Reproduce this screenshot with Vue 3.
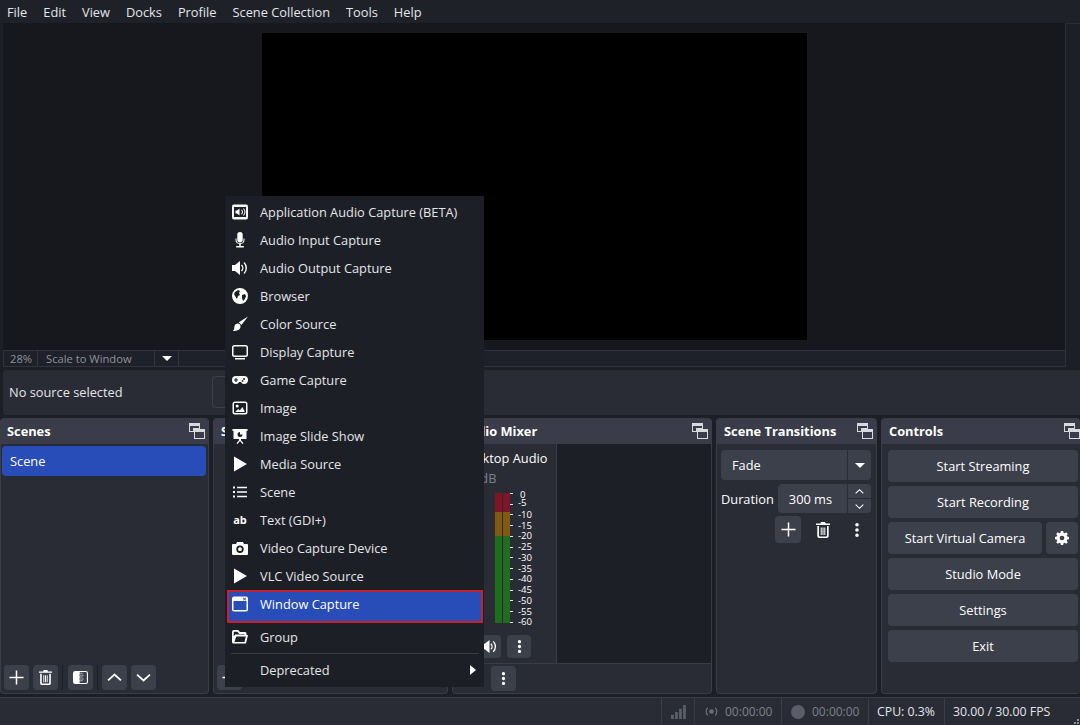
<script setup>
import { h } from 'vue'

// icon outlines, all on a 16x16 box
const icons = {
  appAudio: 'M2 .5h12a2 2 0 0 1 2 2v11a2 2 0 0 1-2 2H2a2 2 0 0 1-2-2v-11a2 2 0 0 1 2-2zM2 3v10h12V3zM3.5 6.5H5L7.5 4.5v7L5 9.5H3.5zM9 6l.8-.6a3.5 3.5 0 0 1 0 5.2L9 10a2.6 2.6 0 0 0 0-4zM11 4.8l.8-.6a5.2 5.2 0 0 1 0 7.6l-.8-.6a4.2 4.2 0 0 0 0-6.4z',
  mic: 'M8 0a2.7 2.7 0 0 1 2.7 2.7v5a2.7 2.7 0 0 1-5.4 0v-5A2.7 2.7 0 0 1 8 0zM3.5 6.5h1v1.2a3.5 3.5 0 0 0 7 0V6.5h1v1.2a4.5 4.5 0 0 1-3.7 4.4V14h3v1.6H4.2V14h3v-1.9a4.5 4.5 0 0 1-3.7-4.4z',
  speaker: 'M0 5h3l5-4v14l-5-4H0zM10 4.500a5 5 0 0 1 0 7l-1-1a3.500 3.500 0 0 0 0-5zM12.500 2a8.500 8.500 0 0 1 0 12l-1-1a7 7 0 0 0 0-10z',
  globe: 'M8 0a8 8 0 1 1 0 16A8 8 0 0 1 8 0zM3 4l3-2 2 1-1 2 1 2-2 1-1 3-2-3-1-2zM10 7l3-1 1 2-1 3-2 2-1-3z',
  brush: 'M16 .5L6.800 6.200l2.600 2.800zM5.500 7.500a3 3 0 0 1 3 3c0 3-3 4.500-7.500 4.500 1.500-1.500 1-3 1.500-5a3 3 0 0 1 3-2.500z',
  display: 'M2.500 1h11A2.500 2.500 0 0 1 16 3.500v7a2.500 2.500 0 0 1-2.500 2.500h-11A2.500 2.500 0 0 1 0 10.500v-7A2.500 2.500 0 0 1 2.500 1zM2.500 2.500a1 1 0 0 0-1 1v7a1 1 0 0 0 1 1h11a1 1 0 0 0 1-1v-7a1 1 0 0 0-1-1zM3 14h10v1.500H3z',
  game: 'M4 4h8a4 4 0 0 1 0 8c-1.500 0-2.500-1-3-2H7c-.5 1-1.500 2-3 2a4 4 0 0 1 0-8zM3.400 6v1.400H2v1.200h1.400V10h1.200V8.600H6V7.400H4.600V6zM12 6a1 1 0 1 0 0 2 1 1 0 0 0 0-2zM10.500 8a.9.9 0 1 0 0 1.800.9.9 0 0 0 0-1.800z',
  image: 'M3 1.500h10A2.500 2.500 0 0 1 15.500 4v8a2.500 2.500 0 0 1-2.500 2.500H3A2.500 2.500 0 0 1 .5 12V4A2.500 2.500 0 0 1 3 1.500zM3 3a1 1 0 0 0-1 1v8a1 1 0 0 0 1 1h10a1 1 0 0 0 1-1V4a1 1 0 0 0-1-1zM5.200 4.500a1.500 1.500 0 1 1 0 3 1.500 1.500 0 0 1 0-3zM3.200 12l3-3 1.500 1.500 2.800-3.500 2.300 5z',
  slides: 'M.5 1h15v2h-1v8H9v1.200l2.500 3-1 .8L8 13l-2.500 3-1-.8 2.500-3V11H1.500V3h-1zM8 4a2.500 2.500 0 1 0 2.500 2.500H8z',
  play: 'M2 .5l13 7.500-13 7.500z',
  list: 'M1 2.500h2v2H1zM5 2.800h10v1.500H5zM1 7h2v2H1zM5 7.300h10v1.500H5zM1 11.500h2v2H1zM5 11.800h10v1.500H5z',
  camera: 'M5 2h6l1 2h3a1 1 0 0 1 1 1v9a1 1 0 0 1-1 1H1a1 1 0 0 1-1-1V5a1 1 0 0 1 1-1h3zM8 5.500a3.700 3.700 0 1 0 0 7.400 3.700 3.700 0 0 0 0-7.400zM8 7.300a1.900 1.900 0 1 1 0 3.800 1.900 1.900 0 0 1 0-3.800z',
  window: 'M2 .5h12a2 2 0 0 1 2 2v11a2 2 0 0 1-2 2H2a2 2 0 0 1-2-2v-11a2 2 0 0 1 2-2zM1.500 5v8.500a.5.5 0 0 0 .5.5h12a.5.5 0 0 0 .5-.5V5zM11.500 1.500l-.6.6 1 .9-1 .9.6.6 1-1 1 1 .6-.6-1-.9 1-.9-.6-.6-1 1z',
  folder: 'M2 1h4l2 2h5a1.500 1.500 0 0 1 1.500 1.500V6H16l-2 8.500H1.500A1.500 1.500 0 0 1 0 13V3a2 2 0 0 1 2-2zM2.200 2.700a.5.5 0 0 0-.5.5V7.500L3 5.500h9.500v-.6H7.300l-2-2.200zM4.300 7.500L2.400 13h10.100l1.300-5.500z',
  plus: 'M7.200 .5h1.600v6.700h6.700v1.600H8.800v6.700H7.200V8.800H.5V7.200h6.700z',
  trash: 'M6 0h4l.6 1.500H15V3H1V1.500h4.400zM2.300 4H4v9.500a1 1 0 0 0 1 1h6a1 1 0 0 0 1-1V4h1.700v10a2 2 0 0 1-2 2H4.300a2 2 0 0 1-2-2zM5.700 5.500h1V13h-1zM7.500 5.500h1V13h-1zM9.300 5.500h1V13h-1z',
  filter: 'M2.500 1h11A2.500 2.500 0 0 1 16 3.500v9a2.500 2.500 0 0 1-2.500 2.500h-11A2.500 2.500 0 0 1 0 12.500v-9A2.500 2.500 0 0 1 2.500 1zM7 2.200V13.800h6.500a1.300 1.300 0 0 0 1.300-1.300v-9a1.300 1.300 0 0 0-1.300-1.300zM7 3h1v1H7zM9 3h1v1H9zM8 5h1v1H8zM10 5h1v1h-1zM7 7h1v1H7zM9 7h1v1H9zM8 9h1v1H8zM10 9h1v1h-1zM7 11h1v1H7zM9 11h1v1H9z',
  up: 'M8 3.500l7.500 7-1.300 1.300L8 6.100l-6.200 5.700L.5 10.500z',
  down: 'M8 12.500l7.500-7-1.300-1.300L8 9.900 1.800 4.200.5 5.500z',
  dots: 'M8 1a1.800 1.800 0 1 1 0 3.600A1.800 1.800 0 0 1 8 1zM8 6.200a1.800 1.800 0 1 1 0 3.600 1.800 1.800 0 0 1 0-3.600zM8 11.400a1.800 1.800 0 1 1 0 3.600 1.800 1.800 0 0 1 0-3.600z',
  gear: 'M6.700 0h2.600l.4 2.100 1.300.6 1.800-1.200 1.800 1.800-1.200 1.800.6 1.300 2 .4v2.600l-2 .4-.6 1.300 1.200 1.800-1.800 1.800-1.800-1.200-1.300.6-.4 2H6.700l-.4-2-1.300-.6-1.800 1.200-1.800-1.800 1.200-1.800-.6-1.300-2-.4V6.800l2-.4.6-1.300L1.400 3.300l1.800-1.800L5 2.700l1.300-.6zM8 5.300a2.700 2.700 0 1 0 0 5.400 2.700 2.700 0 0 0 0-5.400z',
  signal: 'M0 11.500h3V16H0zM4.300 8.500h3V16h-3zM8.600 5h3v11h-3zM12.900 1h3v15h-3z',
  wave: 'M8 5.500a2.500 2.500 0 1 1 0 5 2.500 2.500 0 0 1 0-5zM3.500 3.500l1 1a5 5 0 0 0 0 7l-1 1a6.400 6.400 0 0 1 0-9zM12.500 3.500a6.400 6.400 0 0 1 0 9l-1-1a5 5 0 0 0 0-7z',
  dockFloat: 'M0 0h11v6h5v10H5V9H0zM1 3v5h3V5h6V3zM6 9v6h9V9z'
}

const Icon = (props) => h('svg', { viewBox: '0 0 16 16', fill: 'currentColor' }, [
  h('path', { d: icons[props.name], 'fill-rule': 'evenodd' })
])
Icon.props = ['name']

const menus = ['File', 'Edit', 'View', 'Docks', 'Profile', 'Scene Collection', 'Tools', 'Help']

const sourceTypes = [
  { label: 'Application Audio Capture (BETA)', icon: 'appAudio' },
  { label: 'Audio Input Capture', icon: 'mic' },
  { label: 'Audio Output Capture', icon: 'speaker' },
  { label: 'Browser', icon: 'globe' },
  { label: 'Color Source', icon: 'brush' },
  { label: 'Display Capture', icon: 'display' },
  { label: 'Game Capture', icon: 'game' },
  { label: 'Image', icon: 'image' },
  { label: 'Image Slide Show', icon: 'slides' },
  { label: 'Media Source', icon: 'play' },
  { label: 'Scene', icon: 'list' },
  { label: 'Text (GDI+)', text: 'ab' },
  { label: 'Video Capture Device', icon: 'camera' },
  { label: 'VLC Video Source', icon: 'play' }
]

const ticks = ['0', '-5', '-10', '-15', '-20', '-25', '-30', '-35', '-40', '-45', '-50', '-55', '-60']
const controls = ['Start Streaming', 'Start Recording']
const controlsBottom = ['Studio Mode', 'Settings', 'Exit']
</script>

<template>
  <div class="obs">
    <div class="menubar">
      <span v-for="m in menus" :key="m" class="menubar-item">{{ m }}</span>
    </div>

    <div class="preview">
      <div class="preview-area">
        <div class="canvas"></div>
      </div>
      <div class="preview-side"></div>
    </div>

    <div class="scalebar">
      <div class="scale-track">
        <span class="scale-pct">28%</span>
        <span class="scale-mode">Scale to Window</span>
        <span class="scale-arrow"><i class="caret"></i></span>
      </div>
    </div>

    <div class="contextbar">
      <span>No source selected</span>
      <div class="context-btn"></div>
    </div>

    <div class="docks">
      <!-- Scenes -->
      <section class="dock dock-scenes">
        <header class="dock-title">Scenes<Icon name="dockFloat" class="float" /></header>
        <div class="dock-body">
          <div class="scene-row">Scene</div>
        </div>
        <div class="toolbar">
          <button class="tool"><Icon name="plus" /></button>
          <button class="tool"><Icon name="trash" /></button>
          <i class="tool-sep"></i>
          <button class="tool"><Icon name="filter" /></button>
          <i class="tool-sep"></i>
          <button class="tool"><Icon name="up" /></button>
          <button class="tool"><Icon name="down" /></button>
        </div>
      </section>

      <!-- Sources -->
      <section class="dock dock-sources">
        <header class="dock-title">Sources<Icon name="dockFloat" class="float" /></header>
        <div class="dock-body"></div>
        <div class="toolbar">
          <button class="tool"><Icon name="plus" /></button>
        </div>
      </section>

      <!-- Audio mixer -->
      <section class="dock dock-mixer">
        <header class="dock-title">Audio Mixer<Icon name="dockFloat" class="float" /></header>
        <div class="mixer-body">
          <div class="strip">
            <div class="strip-name">Desktop Audio</div>
            <div class="strip-db">0.0 dB</div>
            <div class="meter-row">
              <div class="meter">
                <div class="channel"><i class="m-red"></i><i class="m-yellow"></i><i class="m-green"></i></div>
                <div class="channel"><i class="m-red"></i><i class="m-yellow"></i><i class="m-green"></i></div>
              </div>
              <div class="scale">
                <div v-for="t in ticks" :key="t" class="tick"><i></i><span>{{ t }}</span></div>
              </div>
            </div>
            <div class="strip-tools">
              <button class="tool"><Icon name="speaker" /></button>
              <button class="tool"><Icon name="dots" /></button>
            </div>
          </div>
        </div>
        <div class="toolbar mixer-foot">
          <button class="tool"><Icon name="dots" /></button>
        </div>
      </section>

      <!-- Scene transitions -->
      <section class="dock dock-trans">
        <header class="dock-title">Scene Transitions<Icon name="dockFloat" class="float" /></header>
        <div class="trans-body">
          <div class="combo">
            <span class="combo-text">Fade</span>
            <span class="combo-arrow"><i class="caret"></i></span>
          </div>
          <div class="duration">
            <span>Duration</span>
            <div class="spin">
              <span class="spin-text">300 ms</span>
              <div class="spin-btns">
                <span><Icon name="up" /></span>
                <span><Icon name="down" /></span>
              </div>
            </div>
          </div>
          <div class="trans-tools">
            <button class="tool tool-big"><Icon name="plus" /></button>
            <button class="tool tool-flat"><Icon name="trash" /></button>
            <button class="tool tool-flat"><Icon name="dots" /></button>
          </div>
        </div>
      </section>

      <!-- Controls -->
      <section class="dock dock-controls">
        <header class="dock-title">Controls<Icon name="dockFloat" class="float" /></header>
        <div class="controls-body">
          <button v-for="c in controls" :key="c" class="ctrl">{{ c }}</button>
          <div class="ctrl-split">
            <button class="ctrl">Start Virtual Camera</button>
            <button class="ctrl ctrl-gear"><Icon name="gear" /></button>
          </div>
          <button v-for="c in controlsBottom" :key="c" class="ctrl">{{ c }}</button>
        </div>
      </section>
    </div>

    <footer class="statusbar">
      <div class="stat stat-signal"><Icon name="signal" /></div>
      <div class="stat stat-time"><Icon name="wave" class="rec-wave" /><span>00:00:00</span></div>
      <div class="stat stat-time"><i class="rec-dot"></i><span>00:00:00</span></div>
      <div class="stat stat-cpu">CPU: 0.3%</div>
      <div class="stat stat-fps">30.00 / 30.00 FPS</div>
      <i class="grip"></i>
    </footer>

    <!-- Add source popup -->
    <div class="popup">
      <div v-for="s in sourceTypes" :key="s.label" class="popup-row">
        <span class="popup-icon">
          <Icon v-if="s.icon" :name="s.icon" />
          <b v-else>{{ s.text }}</b>
        </span>
        <span>{{ s.label }}</span>
      </div>
      <div class="popup-row popup-active">
        <span class="popup-icon"><Icon name="window" /></span>
        <span>Window Capture</span>
      </div>
      <div class="popup-row">
        <span class="popup-icon"><Icon name="folder" /></span>
        <span>Group</span>
      </div>
      <div class="popup-sep"></div>
      <div class="popup-row">
        <span class="popup-icon"></span>
        <span>Deprecated</span>
        <i class="popup-more"></i>
      </div>
    </div>
  </div>
</template>

<style>
html, body { margin: 0; background: #1d1f26; }
</style>

<style scoped>
.obs { position: relative; width: 1080px; height: 725px; overflow: hidden; display: flex; flex-direction: column; background: #1d1f26; color: #fff; font-family: "Open Sans", sans-serif; font-size: 12.8px; }
button { font: inherit; color: inherit; border: 0; padding: 0; }
svg { display: block; }
.caret { display: block; width: 0; height: 0; border-left: 5px solid transparent; border-right: 5px solid transparent; border-top: 5px solid #fff; }

.menubar { height: 23px; flex: none; display: flex; align-items: center; gap: 16px; padding-left: 7px; background: #1f2129; color: #e4e5e8; }

.preview { height: 327px; flex: none; display: flex; padding-left: 3px; }
.preview-area { flex: 1; padding: 10px 0 10px 259px; background: #16181d; }
.canvas { width: 545px; height: 100%; background: #000; }
.preview-side { width: 14px; flex: none; border-left: 1px solid #2c2e36; border-top: 1px solid #2c2e36; }

.scalebar { height: 20px; flex: none; padding: 0 14px 0 3px; }
.scale-track { height: 17px; display: flex; align-items: center; background: #1e2129; border: 1px solid #30333b; box-sizing: border-box; color: #8f929b; font-size: 11.2px; }
.scale-pct { width: 34px; padding-left: 6px; box-sizing: border-box; border-right: 1px solid #33363e; }
.scale-mode { width: 117px; padding-left: 8px; box-sizing: border-box; border-right: 1px solid #33363e; }
.scale-arrow { width: 23px; height: 15px; display: flex; align-items: center; justify-content: center; border-right: 1px solid #33363e; }

.contextbar { height: 45px; flex: none; margin: 0 0 3px 3px; padding: 0 6px 2px; box-sizing: border-box; display: flex; align-items: center; background: #292c35; border-radius: 4px 0 0 4px; color: #e4e5e8; }
.context-btn { width: 120px; height: 32px; margin-left: 89px; border: 1px solid #3c404b; border-radius: 4px; box-sizing: border-box; }

.docks { height: 276px; flex: none; display: flex; gap: 4px; }
.dock { display: flex; flex-direction: column; background: #292c35; border: 1px solid #3a3d47; border-top: 0; border-radius: 4px; box-sizing: border-box; }
.dock-scenes { width: 209px; }
.dock-sources { width: 235px; }
.dock-mixer { width: 260px; }
.dock-trans { width: 161px; }
.dock-controls { flex: 1; border-right: 0; }
.dock-title { position: relative; height: 26px; flex: none; display: flex; align-items: center; padding-left: 7px; background: #3a3d49; border-radius: 4px 4px 0 0; font-weight: 700; }
.dock-scenes .dock-title { padding-left: 6px; }
.float { position: absolute; right: 3px; top: 5px; width: 16px; height: 16px; color: #d8d9dc; }
.dock-controls .float { right: 0; }
.dock-body { flex: 1; padding: 2px 2px 2px 1px; }
.scene-row { height: 30px; display: flex; align-items: center; padding-left: 8px; background: #284cb8; border-radius: 4px; }

.toolbar { height: 32px; flex: none; display: flex; align-items: center; gap: 4px; padding-left: 3px; }
.tool { width: 25px; height: 25px; display: flex; align-items: center; justify-content: center; background: #3c404b; border-radius: 4px; }
.tool svg { width: 15px; height: 15px; }
.tool-sep { width: 1px; height: 25px; background: #1d1f26; }
.tool-sep:nth-child(3) { margin-right: 1px; }

.mixer-body { flex: 1; display: flex; background: #1d1f26; min-height: 0; }
.strip { width: 104px; box-sizing: border-box; background: #292c35; border-right: 1px solid #3a3d47; position: relative; }
.strip-name { position: absolute; left: 7px; top: 5px; white-space: nowrap; }
.strip-db { position: absolute; left: 6px; top: 25px; color: #7d808a; white-space: nowrap; }
.meter-row { position: absolute; left: 42px; top: 49px; display: flex; }
.meter { display: flex; gap: 1px; height: 130px; }
.channel { width: 7px; display: flex; flex-direction: column; }
.channel i { display: block; }
.m-red { height: 19px; background: #7f1527; }
.m-yellow { height: 24px; background: #7f5a0f; }
.m-green { flex: 1; background: #1e6e1e; }
.scale { margin-top: -5px; display: flex; flex-direction: column; }
.tick { height: 10.75px; display: flex; align-items: center; font-size: 9.6px; line-height: 10px; }
.tick i { width: 3px; height: 1px; margin-right: 5px; background: #e4e5e8; }
.tick span { position: relative; white-space: nowrap; }
.tick:first-child span { left: 2px; top: 2px; }
.tick:nth-child(2) span { top: -1px; }
.strip-tools { position: absolute; left: 24px; top: 191px; display: flex; gap: 6px; }
.strip-tools .tool { width: 24px; height: 23px; }
.mixer-foot { height: 30px; border-top: 1px solid #3a3d47; box-sizing: border-box; padding-left: 39px; }
.mixer-foot .tool { margin-left: -1px; }

.trans-body { padding: 6px 5px 0 4px; display: flex; flex-direction: column; }
.combo { height: 30px; display: flex; align-items: center; background: #3c404b; border-radius: 4px; }
.combo-text { flex: 1; padding-left: 11px; }
.combo-arrow { width: 23px; height: 30px; display: flex; align-items: center; justify-content: center; border-left: 1px solid #292c35; }
.duration { margin-top: 4px; height: 29px; display: flex; align-items: center; gap: 4px; }
.spin { flex: 1; height: 29px; display: flex; align-items: center; background: #3c404b; border-radius: 4px; }
.spin-text { flex: 1; padding-left: 11px; }
.spin-btns { width: 23px; height: 29px; display: flex; flex-direction: column; border-left: 1px solid #292c35; }
.spin-btns span { flex: 1; display: flex; align-items: center; justify-content: center; }
.spin-btns span:first-child { border-bottom: 1px solid #292c35; }
.spin-btns svg { width: 9px; height: 9px; }
.trans-tools { margin-top: 3px; padding-left: 54px; display: flex; align-items: center; gap: 9px; }
.tool-big { width: 26px; height: 27px; }
.tool-flat { background: none; }
.tool-flat svg { width: 16px; height: 16px; }

.controls-body { padding: 6px 2px 0 6px; display: flex; flex-direction: column; gap: 4px; }
.ctrl { height: 32px; width: 100%; background: #3c404b; border-radius: 4px; text-align: center; }
.ctrl-split { display: flex; gap: 4px; }
.ctrl-split .ctrl:first-child { flex: 1; width: auto; }
.ctrl-gear { width: 32px; flex: none; display: flex; align-items: center; justify-content: center; }
.ctrl-gear svg { width: 14px; height: 14px; }

.statusbar { position: relative; flex: 1; margin-top: 3px; display: flex; justify-content: flex-end; background: #292c35; border-top: 1px solid #3a3d47; box-sizing: border-box; }
.stat { display: flex; align-items: center; border-left: 1px solid #3a3d47; box-sizing: border-box; }
.stat-signal { width: 33px; justify-content: center; color: #5b5e68; }
.stat-signal svg { width: 15px; height: 15px; }
.stat-time { width: 87px; padding-left: 9px; gap: 6px; color: #7d808a; font-size: 12px; }
.rec-wave { width: 15px; height: 15px; color: #6a6d77; }
.rec-dot { width: 14px; height: 14px; margin-right: 1px; border-radius: 50%; background: #5b5e68; }
.stat-cpu { width: 76px; padding-left: 8px; font-size: 12.3px; color: #e4e5e8; }
.stat-fps { width: 136px; padding-left: 8px; font-size: 12.3px; color: #e4e5e8; }
.grip { position: absolute; right: 1px; bottom: 1px; width: 2px; height: 2px; background: #8f929b; box-shadow: 0 -3px 0 #8f929b, -3px 0 0 #8f929b; }

.popup { position: absolute; left: 225px; top: 196px; width: 259px; height: 491px; box-sizing: border-box; padding-top: 2px; background: #1d1f26; color: #e4e5e8; }
.popup-row { position: relative; height: 28px; display: flex; align-items: center; padding-left: 7px; box-sizing: border-box; white-space: nowrap; }
.popup-icon { width: 16px; height: 16px; margin-right: 12px; flex: none; color: #fff; display: flex; align-items: center; justify-content: center; }
.popup-icon svg { width: 16px; height: 16px; }
.popup-icon b { font-size: 11px; line-height: 16px; }
.popup-active { height: 33px; margin: 0 1px 0 2px; padding-left: 3px; padding-bottom: 6px; background: #284cb8; color: #fff; border: 2px solid #c8202f; }
.popup-sep { height: 1px; margin: 2px 5px 2px 6px; background: #3a3d47; }
.popup-more { position: absolute; right: 8px; top: 9px; width: 0; height: 0; border-top: 5px solid transparent; border-bottom: 5px solid transparent; border-left: 6px solid #fff; }
</style>
